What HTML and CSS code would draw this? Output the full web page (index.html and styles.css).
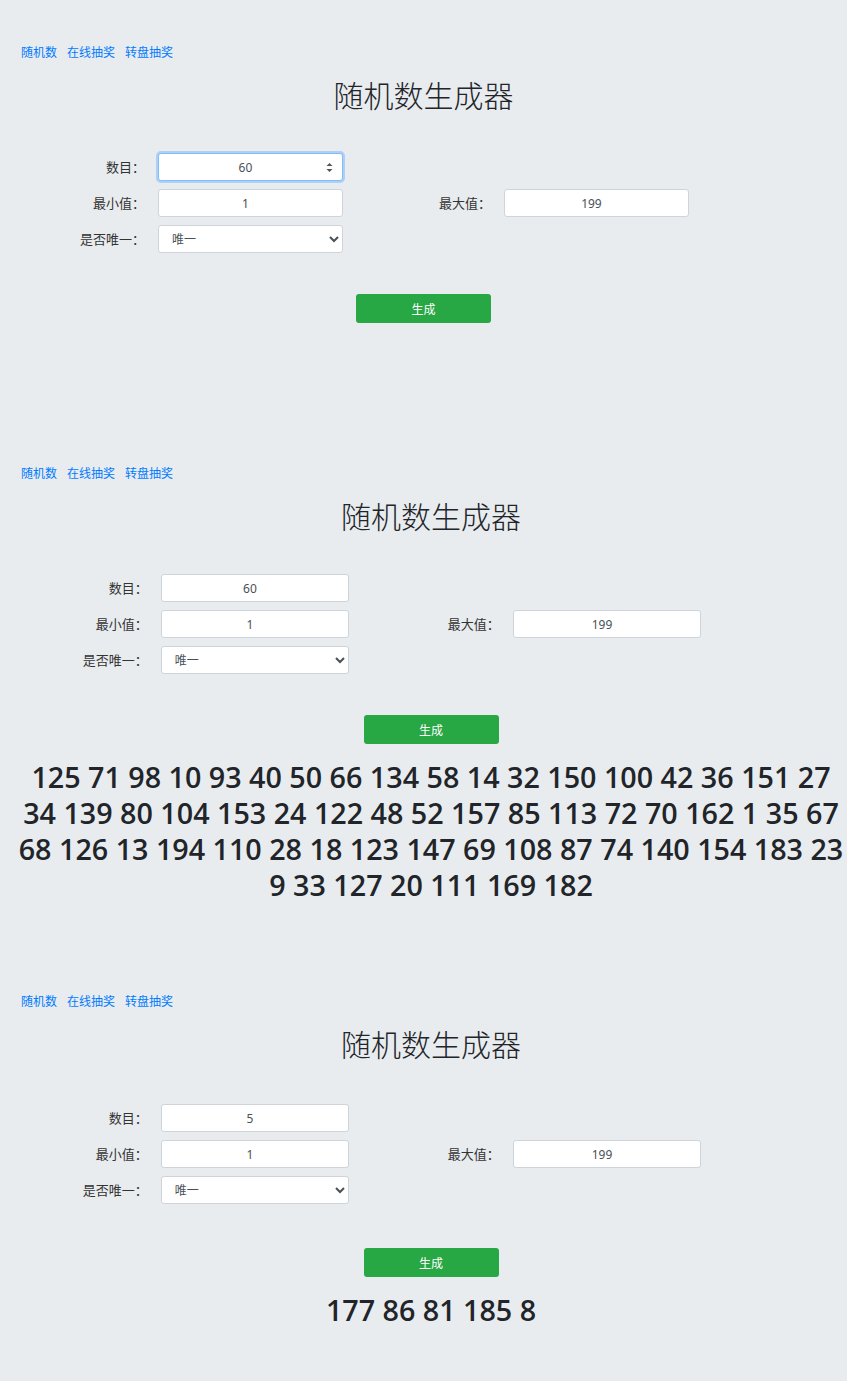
FILE: index.html
```html
<!DOCTYPE html>
<html lang="zh-CN">
<head>
    <meta charset="UTF-8">
    <meta name="viewport" content="width=device-width, initial-scale=1.0">
    <title>随机数生成器</title>
    <link rel="stylesheet" href="styles.css">
</head>
<body>
    <section class="shot shot-first">
        <nav class="links">
            <a href="#">随机数</a>
            <a href="#">在线抽奖</a>
            <a href="#">转盘抽奖</a>
        </nav>
        <h1>随机数生成器</h1>
        <div class="gen-form">
            <div class="form-row">
                <label>数目：</label>
                <div class="field focused">
                    <input type="text" value="60">
                    <svg class="spin" width="7" height="11" viewBox="0 0 7 11"><path d="M0.5 4 L3.5 1 L6.5 4 Z M0.5 7 L3.5 10 L6.5 7 Z" fill="#555"/></svg>
                </div>
            </div>
            <div class="form-row">
                <label>最小值：</label>
                <div class="field"><input type="text" value="1"></div>
                <label>最大值：</label>
                <div class="field"><input type="text" value="199"></div>
            </div>
            <div class="form-row">
                <label>是否唯一：</label>
                <div class="field">
                    <select><option>唯一</option><option>可重复</option></select>
                </div>
            </div>
        </div>
        <div class="actions"><button>生成</button></div>
    </section>

    <section class="shot shot-wide shot-second">
        <nav class="links">
            <a href="#">随机数</a>
            <a href="#">在线抽奖</a>
            <a href="#">转盘抽奖</a>
        </nav>
        <h1>随机数生成器</h1>
        <div class="gen-form">
            <div class="form-row">
                <label>数目：</label>
                <div class="field"><input type="text" value="60"></div>
            </div>
            <div class="form-row">
                <label>最小值：</label>
                <div class="field"><input type="text" value="1"></div>
                <label>最大值：</label>
                <div class="field"><input type="text" value="199"></div>
            </div>
            <div class="form-row">
                <label>是否唯一：</label>
                <div class="field">
                    <select><option>唯一</option><option>可重复</option></select>
                </div>
            </div>
        </div>
        <div class="actions"><button>生成</button></div>
        <p class="result">125 71 98 10 93 40 50 66 134 58 14 32 150 100 42 36 151 27 34 139 80 104 153 24 122 48 52 157 85 113 72 70 162 1 35 67 68 126 13 194 110 28 18 123 147 69 108 87 74 140 154 183 23 9 33 127 20 111 169 182</p>
    </section>

    <section class="shot shot-wide shot-third">
        <nav class="links">
            <a href="#">随机数</a>
            <a href="#">在线抽奖</a>
            <a href="#">转盘抽奖</a>
        </nav>
        <h1>随机数生成器</h1>
        <div class="gen-form">
            <div class="form-row">
                <label>数目：</label>
                <div class="field"><input type="text" value="5"></div>
            </div>
            <div class="form-row">
                <label>最小值：</label>
                <div class="field"><input type="text" value="1"></div>
                <label>最大值：</label>
                <div class="field"><input type="text" value="199"></div>
            </div>
            <div class="form-row">
                <label>是否唯一：</label>
                <div class="field">
                    <select><option>唯一</option><option>可重复</option></select>
                </div>
            </div>
        </div>
        <div class="actions"><button>生成</button></div>
        <p class="result">177 86 81 185 8</p>
    </section>
</body>
</html>
```
FILE: styles.css
```css
* {
    box-sizing: border-box;
}

html, body {
    margin: 0;
    overflow-x: hidden;
}

body {
    background: #e9ecef;
    color: #212529;
    font-family: "Noto Sans", "Noto Sans CJK SC", sans-serif;
    font-size: 12px;
}

.shot {
    width: 847px;
    padding-top: 43px;
    overflow: hidden;
}

.shot-wide {
    width: 862px;
}

.shot-first { height: 421px; }
.shot-second { height: 528px; }
.shot-third { height: 432px; }

.links {
    display: flex;
    gap: 10px;
    padding-left: 21px;
    line-height: 18px;
}

.links a {
    color: #007bff;
    text-decoration: none;
    font-family: "Noto Sans CJK SC", sans-serif;
}

h1 {
    margin: 13px 0 0;
    text-align: center;
    font-family: "Noto Sans CJK SC", sans-serif;
    font-weight: 300;
    font-size: 30px;
    line-height: 40px;
    color: #212529;
}

.gen-form {
    display: flex;
    flex-direction: column;
    gap: 8px;
    margin-top: 39px;
}

.shot-third .gen-form {
    margin-top: 41px;
}

.form-row {
    display: grid;
    grid-template-columns: 17.25% 21.85% 16.2% 21.85%;
    column-gap: 1.4%;
    height: 28px;
}

.form-row label {
    text-align: right;
    line-height: 28px;
    padding-right: 1px;
    color: #333;
    font-family: "Noto Sans CJK SC", sans-serif;
    font-size: 13px;
}

.field {
    position: relative;
}

.field input,
.field select {
    width: 100%;
    height: 28px;
    border: 1px solid #ced4da;
    border-radius: 3px;
    background: #fff;
    color: #495057;
    font-family: "Noto Sans", "Noto Sans CJK SC", sans-serif;
    font-size: 12px;
    outline: none;
}

.field input {
    text-align: center;
    padding: 0 18px 0 8px;
}

.field select {
    padding: 0 9px;
}

.focused input {
    border-color: #80bdff;
    box-shadow: 0 0 0 2px rgba(0, 123, 255, 0.25);
}

.spin {
    position: absolute;
    right: 10px;
    top: 9px;
}

.actions {
    display: flex;
    justify-content: center;
    margin-top: 41px;
}

.shot-third .actions {
    margin-top: 44px;
}

.actions button {
    width: 135px;
    height: 29px;
    border: none;
    border-radius: 3px;
    background: #28a745;
    color: #fff;
    font-family: "Noto Sans CJK SC", sans-serif;
    font-size: 12px;
    cursor: pointer;
}

.result {
    margin: 15px 0 0;
    padding: 0 16px;
    text-align: center;
    font-family: "Open Sans", "Noto Sans", sans-serif;
    font-weight: 600;
    font-size: 28.7px;
    line-height: 36px;
    color: #212529;
}
```
